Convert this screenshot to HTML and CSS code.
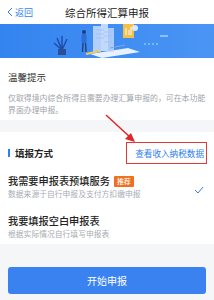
FILE: index.html
```html
<!DOCTYPE html>
<html lang="zh-CN">
<head>
    <meta charset="UTF-8">
    <meta name="viewport" content="width=device-width, initial-scale=1.0">
    <title>综合所得汇算申报</title>
    <link rel="stylesheet" href="styles.css">
</head>
<body>
    <div class="nav">
        <a class="back">
            <svg width="8" height="10" viewBox="0 0 8 10"><path d="M6 1 L2 5 L6 9" fill="none" stroke="#2f7fef" stroke-width="1"/></svg>
            返回
        </a>
        <div class="nav-title">综合所得汇算申报</div>
    </div>

    <div class="banner">
        <svg width="214" height="34" viewBox="0 0 214 34">
            <!-- plant -->
            <path d="M62 26 L57 14 M62 26 L62 12 M62 26 L67 15 M62 26 L54 19" stroke="#1e4fa8" stroke-width="1.5" fill="none"/>
            <rect x="58" y="25" width="8" height="6" fill="#2a4f96"/>
            <!-- phone -->
            <path d="M90 30 L128 24 L140 28 L102 34 Z" fill="#e8f1ff"/>
            <rect x="93" y="2" width="8" height="26" fill="#cfe1fb" opacity="0.8"/>
            <rect x="101" y="0" width="7" height="27" fill="#e2edfc" opacity="0.8"/>
            <rect x="108" y="4" width="6" height="24" fill="#c4dafa" opacity="0.8"/>
            <path d="M96 6 h8 M96 10 h8 M96 14 h8 M104 8 h8 M104 12 h8 M104 18 h8" stroke="#9fc1f2" stroke-width="0.8"/>
            <path d="M110 24 L125 21" stroke="#7fa8ea" stroke-width="1"/>
            <path d="M86 30 L100 27" stroke="#f6c85a" stroke-width="2"/>
            <!-- person -->
            <circle cx="84" cy="8" r="2" fill="#1d3f7a"/>
            <rect x="81.5" y="10" width="5" height="9" rx="1.5" fill="#2b6fd6"/>
            <path d="M83 19 L82.5 28 M85.5 19 L86 28" stroke="#1d3f7a" stroke-width="1.4"/>
            <!-- card -->
            <rect x="123" y="0" width="11" height="14" fill="#f5c04a"/>
            <path d="M126 4 v7 M129 6 v5 M131 3 v8" stroke="#fff" stroke-width="1"/>
            <circle cx="135" cy="4" r="3" fill="#dbe8fb"/>
            <!-- dashes -->
            <path d="M144 20 h2 M148 20 h2 M152 20 h2 M156 20 h2" stroke="#bcd6fa" stroke-width="1"/>
            <path d="M160 12 h8" stroke="#ffffff" stroke-width="1" opacity="0.8"/>
        </svg>
    </div>

    <div class="card tips">
        <div class="tips-title">温馨提示</div>
        <p class="tips-text">仅取得境内综合所得且需要办理汇算申报的，可在本功能界面办理申报。</p>
    </div>

    <div class="card method">
        <div class="method-head">
            <div class="method-title">填报方式</div>
            <a class="method-link">查看收入纳税数据</a>
        </div>
        <div class="option">
            <div class="option-body">
                <div class="option-title">我需要申报表预填服务 <span class="badge">推荐</span></div>
                <div class="option-desc">数据来源于自行申报及支付方扣缴申报</div>
            </div>
            <svg class="check" width="10" height="8" viewBox="0 0 10 8"><path d="M1 4 L4 7 L9 1" fill="none" stroke="#2f7fef" stroke-width="1"/></svg>
        </div>
        <div class="option">
            <div class="option-body">
                <div class="option-title">我要填报空白申报表</div>
                <div class="option-desc">根据实际情况自行填写申报表</div>
            </div>
        </div>

        <svg class="arrow" width="40" height="34" viewBox="0 0 40 34">
            <path d="M2 1 L27 24" stroke="#e02525" stroke-width="1.5"/>
            <path d="M31 28 L21 25 L27 19 Z" fill="#e02525"/>
        </svg>
    </div>

    <div class="footer">
        <button class="submit">开始申报</button>
    </div>
</body>
</html>
```

FILE: styles.css
```css
body {
    margin: 0;
    width: 214px;
    background-color: #f5f6f8;
    font-family: "Noto Sans CJK SC", "Noto Sans", sans-serif;
    color: #222;
}
.nav {
    height: 24px;
    background-color: white;
    display: flex;
    align-items: center;
    position: relative;
}
.back {
    display: flex;
    align-items: center;
    gap: 1px;
    padding-left: 6px;
    font-size: 9px;
    color: #2f7fef;
}
.nav-title {
    position: absolute;
    left: 0;
    right: 0;
    text-align: center;
    font-size: 10.5px;
    color: #222;
    pointer-events: none;
}
.banner {
    height: 34px;
    background: linear-gradient(90deg, #3484f0, #4a95f4);
    overflow: hidden;
}
.banner svg {
    display: block;
}
.card {
    background-color: white;
    padding: 0 8px;
}
.tips {
    padding-top: 12px;
    padding-bottom: 5px;
}
.tips-title {
    font-size: 9.5px;
    line-height: 14px;
    color: #333;
}
.tips-text {
    margin: 8px 0 0;
    font-size: 7.9px;
    line-height: 11.5px;
    color: #a0a4aa;
}
.method {
    margin-top: 12px;
    padding-top: 10px;
    position: relative;
}
.method-head {
    display: flex;
    justify-content: space-between;
    align-items: center;
    height: 22px;
}
.method-title {
    font-size: 9.5px;
    font-weight: bold;
    border-left: 2px solid #2f7fef;
    padding-left: 5px;
    line-height: 8px;
}
.method-link {
    font-size: 8.6px;
    color: #2f7fef;
    border: 1px solid #e0393a;
    height: 20px;
    line-height: 20px;
    padding: 0 2px 0 8px;
    margin-right: -1px;
}
.option {
    display: flex;
    align-items: center;
    padding: 10px 0 4px;
}
.option-body {
    flex: 1;
}
.option-title {
    font-size: 10.2px;
    line-height: 14px;
    font-weight: 500;
    color: #222;
    display: flex;
    align-items: center;
    gap: 4px;
}
.badge {
    background-color: #f07020;
    color: white;
    font-size: 7px;
    line-height: 11px;
    padding: 0 3px;
    border-radius: 1px;
}
.option-desc {
    font-size: 7.8px;
    line-height: 12px;
    color: #a8acb2;
}
.check {
    margin-right: 2px;
    margin-top: 6px;
}
.arrow {
    position: absolute;
    left: 104px;
    top: -18px;
}
.footer {
    padding: 22px 8px 0;
}
.submit {
    width: 100%;
    height: 27px;
    background-color: #3a82f0;
    color: white;
    border: none;
    border-radius: 3px;
    font-family: inherit;
    font-size: 10px;
}
```
